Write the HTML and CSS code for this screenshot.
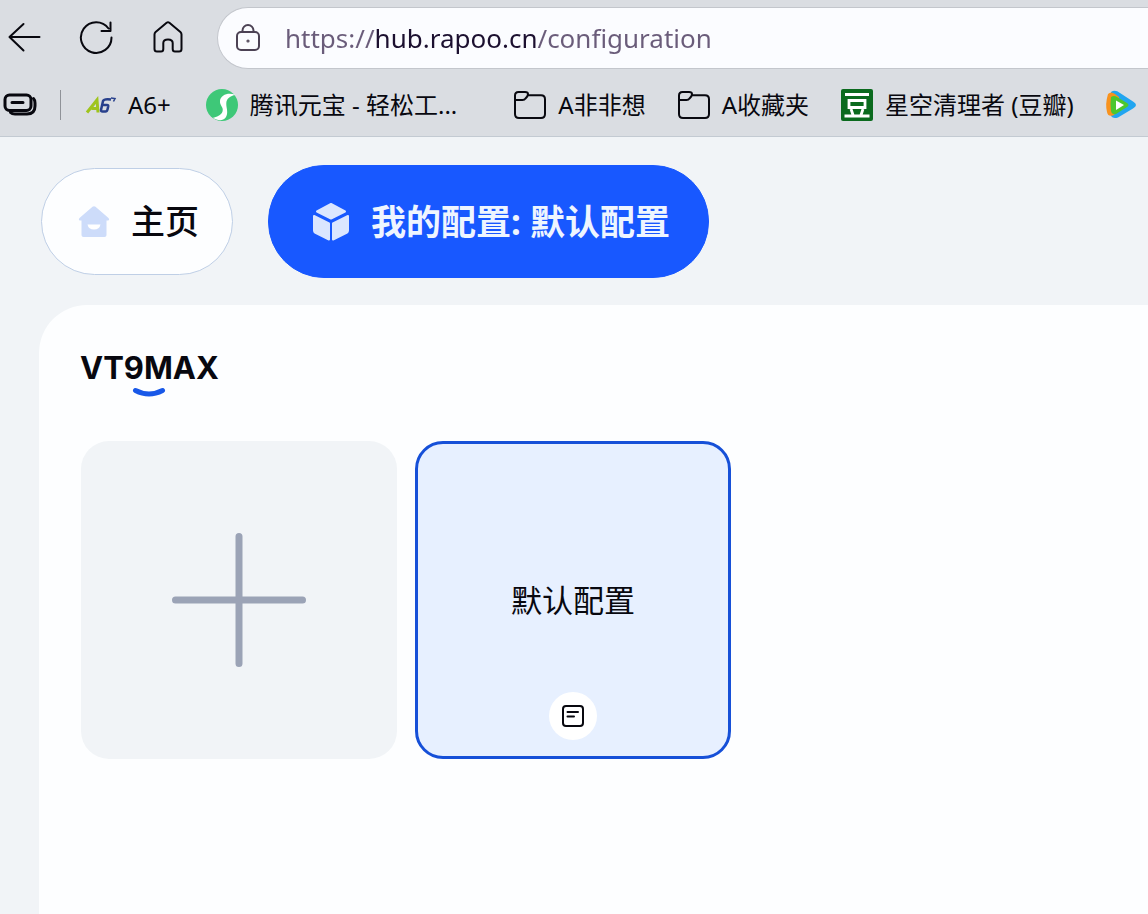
FILE: index.html
```html
<!DOCTYPE html>
<html lang="zh-CN">
<head>
<meta charset="utf-8">
<title>我的配置</title>
<link rel="stylesheet" href="styles.css">
</head>
<body>
<header class="chrome">
  <div class="toolbar">
    <button class="tool" type="button" aria-label="后退">
      <svg width="34" height="34" viewBox="0 0 34 34"><path d="M32.500 16H2.500M16.500 3L2.500 16l14 13.500"/></svg>
    </button>
    <button class="tool" type="button" aria-label="刷新">
      <svg width="34" height="34" viewBox="0 0 34 34"><path d="M32.500 16.500A15.300 15.300 0 1 1 29.500 7.500M31.500 1.500v8.500h-9"/></svg>
    </button>
    <button class="tool" type="button" aria-label="主页">
      <svg width="34" height="34" viewBox="0 0 34 34"><path d="M3.500 13.500Q3.500 12 4.600 11L15.600 1.800Q17 .8 18.400 1.800L29.400 11Q30.500 12 30.500 13.500V28Q30.500 30.500 28 30.500H24Q21.700 30.500 21.700 28V22Q21.700 18.500 17 18.500T12.300 22V28Q12.300 30.500 10 30.500H6Q3.500 30.500 3.500 28Z"/></svg>
    </button>
    <form class="address">
      <svg class="lock" width="26" height="30" viewBox="0 0 26 30"><rect x="2" y="9" width="22" height="18" rx="4"/><path d="M7.500 9V7.500a5.500 5.500 0 0 1 11 0V9"/><circle cx="13" cy="18" r=".6"/></svg>
      <input class="url" type="text" aria-label="地址" value="https://hub.rapoo.cn/configuration">
    </form>
  </div>
  <nav class="bookmarks" aria-label="收藏夹栏">
    <button class="tabs-button" type="button" aria-label="标签页操作">
      <svg width="34" height="24" viewBox="0 0 34 24"><rect x="2" y="2" width="26" height="15.500" rx="4.500"/><path d="M9 9.500h11M30.500 5.500Q32 7 32 10v3q0 8-8 8H12q-3 0-4.500-1.500"/></svg>
    </button>
    <span class="divider"></span>
    <a class="bookmark bookmark-a6" href="#">
      <svg width="32" height="20" viewBox="0 0 32 20"><path d="M2 17.500L12 5l1 12.500M6.500 13.500h7" fill="none" stroke="#9fc41c" stroke-width="3"/><path d="M26 4.500Q19 3.500 18 6L16 15Q15.800 16.500 17.500 16.500h3q1.500 0 2-2l.7-3q.3-1.500-1.200-1.500h-4.500" fill="none" stroke="#28408c" stroke-width="2.500"/><path d="M26 3l4 .5-1.500 3" fill="none" stroke="#28408c" stroke-width="1.500"/></svg>
      <span>A6+</span>
    </a>
    <a class="bookmark bookmark-yuanbao" href="#">
      <svg width="34" height="34" viewBox="0 0 34 34"><circle cx="17" cy="17" r="16" fill="#3ec878"/><path d="M30.500 7C24 4 15.500 6.500 15 13c-.4 5 4 6 2.500 10.500-1.300 4-6 5.500-9.500 6.200 4 3 10 3.500 12.500 0 3.500-5 .500-10 .8-14.500.2-4.500 4-7.500 9.200-8.200Z" fill="#fff"/></svg>
      <span>腾讯元宝 - 轻松工...</span>
    </a>
    <a class="bookmark" href="#">
      <svg class="folder" width="34" height="30" viewBox="0 0 34 30"><path d="M2 5.500Q2 2 5.500 2H12q3 0 3 2t-2.500 4.500Q11.500 10 9.500 10H2M15.500 5.200H28q4 0 4 4V24q0 4-4 4H6q-4 0-4-4V5.500"/></svg>
      <span>A非非想</span>
    </a>
    <a class="bookmark" href="#">
      <svg class="folder" width="34" height="30" viewBox="0 0 34 30"><path d="M2 5.500Q2 2 5.500 2H12q3 0 3 2t-2.500 4.500Q11.500 10 9.500 10H2M15.500 5.200H28q4 0 4 4V24q0 4-4 4H6q-4 0-4-4V5.500"/></svg>
      <span>A收藏夹</span>
    </a>
    <a class="bookmark" href="#">
      <svg width="34" height="34" viewBox="0 0 34 34"><rect x="1" y="1" width="32" height="32" rx="2" fill="#0b6a1e"/><path d="M5 6.500h24M9 12.500h16v7H9ZM11 21l2 6M23 21l-2 6M4.500 28h25" fill="none" stroke="#fff" stroke-width="2.800"/></svg>
      <span>星空清理者 (豆瓣)</span>
    </a>
    <a class="bookmark" href="#" aria-label="腾讯视频">
      <svg width="32" height="30" viewBox="0 0 32 30"><path d="M6 2Q10-1 15 3L28 11.500Q34 15 28 18.500L13 27.500Q8 29 6 26Z" fill="#21a5f0"/><path d="M3 4Q6 1 10 4L14 7v14L8 25.500Q3 27 2 22 0 14 3 4Z" fill="#f8921e"/><path d="M6 7Q9 5 12 7L22 13Q25 15 22 17L11 24Q7 25 6 21Q5 14 6 7Z" fill="#4cc72e"/><path d="M11 10.500L19 15l-8 5Z" fill="#fff"/></svg>
    </a>
  </nav>
</header>
<div class="app">
  <nav class="tabs" aria-label="主导航">
    <a class="tab" href="#">
      <svg width="32" height="34" viewBox="0 0 32 34"><path d="M14.500 1.700Q16 .6 17.500 1.700L30.500 13q1.500 2-.5 2.500h-1.500V30q0 2-2 2h-21q-2 0-2-2V15.500H2Q0 15 1.500 13Z" fill="#cddcfa"/><path d="M9.500 19.500h13q-1 5-6.500 5t-6.500-5Z" fill="#fff"/></svg>
      <span>主页</span>
    </a>
    <a class="tab tab-active" href="#" aria-current="page">
      <svg width="38" height="40" viewBox="0 0 38 40"><g fill="#dbe6ff" stroke="#dbe6ff" stroke-width="2" stroke-linejoin="round"><path d="M19 2L33 9.500 19 16.500 5 9.500Z"/><path d="M2 14L17 21.500V37.500L3 30.500Q2 30 2 28.500Z"/><path d="M36 14L21 21.500V37.500L35 30.500Q36 30 36 28.500Z"/></g></svg>
      <span>我的配置: 默认配置</span>
    </a>
  </nav>
  <main class="panel">
    <h1 class="device">
      <span>VT9MAX</span>
      <svg width="34" height="12" viewBox="0 0 34 12"><path d="M3.500 3.500Q17 10.500 30.500 3.500" fill="none" stroke="#1858e8" stroke-width="5" stroke-linecap="round"/></svg>
    </h1>
    <div class="cards">
      <button class="card card-add" type="button" aria-label="添加配置">
        <svg width="136" height="136" viewBox="0 0 136 136"><path d="M68 4.500v127M4.500 68h127" stroke="#9ba3b6" stroke-width="7" stroke-linecap="round"/></svg>
      </button>
      <article class="card card-selected">
        <span class="card-name">默认配置</span>
        <button class="note" type="button" aria-label="备注">
          <svg width="24" height="24" viewBox="0 0 24 24"><rect x="2" y="2" width="20" height="20" rx="3"/><path d="M6.500 8H17M6.500 12.500H13"/></svg>
        </button>
      </article>
    </div>
  </main>
</div>
</body>
</html>
```
FILE: styles.css
```css
* {
  box-sizing: border-box;
}

body {
  margin: 0;
  min-height: 100vh;
  display: flex;
  flex-direction: column;
  overflow-x: hidden;
  background: #f1f4f7;
  color: #08080f;
  font-family: "Noto Sans", "Noto Sans CJK SC", sans-serif;
}

a {
  color: inherit;
  text-decoration: none;
}

button {
  padding: 0;
  border: 0;
  background: none;
  color: inherit;
  font: inherit;
}

svg {
  display: block;
  flex: none;
}

.chrome {
  overflow: hidden;
  background: #dadde2;
  border-bottom: 1px solid #c3cad2;
}

.toolbar {
  display: flex;
  align-items: center;
  gap: 38px;
  padding: 7px 0 0 7px;
}

.tool svg,
.tabs-button svg,
.folder,
.lock,
.note svg {
  fill: none;
  stroke: currentColor;
  stroke-width: 2;
  stroke-linecap: round;
  stroke-linejoin: round;
}

.tabs-button svg {
  stroke-width: 3;
}

.address {
  flex: 1;
  display: flex;
  align-items: center;
  gap: 24px;
  height: 62px;
  margin-left: -6px;
  padding-left: 17px;
  border: 1px solid #c3c6cc;
  border-right: 0;
  border-radius: 31px 0 0 31px;
  background: #fbfcff;
}

.lock {
  color: #4c4254;
}

.url {
  flex: 1;
  min-width: 0;
  padding: 0;
  border: 0;
  outline: 0;
  font: 26px/36px "Noto Sans", sans-serif;
  color: transparent;
  background: linear-gradient(90deg, #6a5c7a 90px, #1c1030 90px, #1c1030 252px, #6a5c7a 252px);
  -webkit-background-clip: text;
  background-clip: text;
}

.bookmarks {
  display: flex;
  align-items: center;
  height: 67px;
  padding: 5px 0 0 3px;
  font-size: 24px;
  line-height: 34px;
  white-space: nowrap;
}

.divider {
  flex: none;
  width: 1px;
  height: 30px;
  margin: 0 24px 0 23px;
  background: #8f9298;
}

.bookmark {
  display: flex;
  align-items: center;
  gap: 11px;
  margin-right: 31px;
}

.bookmark-a6 {
  margin-right: 34px;
}

.bookmark-yuanbao {
  margin-right: 56px;
}

.app {
  flex: 1;
  display: flex;
  flex-direction: column;
}

.tabs {
  display: flex;
  align-items: center;
  gap: 35px;
  padding: 28px 41px 27px;
}

.tab {
  display: flex;
  align-items: center;
  gap: 21px;
  padding: 28px 33px 28px 36px;
  border: 1px solid #bfcfe6;
  border-radius: 56px;
  background: #fdfeff;
  font-size: 34px;
  line-height: 49px;
  font-weight: 500;
}

.tab-active {
  padding: 31px 38px 31px 43px;
  border-color: #1858ff;
  background: #1858ff;
  color: #eef5ff;
  font-size: 35px;
  font-weight: 700;
}

.panel {
  flex: 1;
  margin-left: 39px;
  padding: 44px 41px;
  border-radius: 48px 0 0 0;
  background: #fdfeff;
}

.device {
  display: flex;
  flex-direction: column;
  align-items: center;
  width: max-content;
  margin: 0 0 42px;
  font: 700 31px/38px Inter, sans-serif;
}

.cards {
  display: flex;
  flex-wrap: wrap;
  gap: 18px;
  padding-left: 1px;
}

.card {
  display: grid;
  place-items: center;
  width: 316px;
  height: 318px;
  border-radius: 28px;
}

.card-add {
  background: #f1f4f7;
}

.card-selected {
  grid-template-rows: 1fr auto 1fr;
  border: 3px solid #1650d8;
  background: #e7f0ff;
}

.card-name {
  grid-row: 2;
  font-size: 31px;
  line-height: 44px;
}

.note {
  grid-row: 3;
  display: grid;
  place-items: center;
  align-self: end;
  width: 48px;
  height: 48px;
  margin-bottom: 16px;
  border-radius: 50%;
  background: #fff;
}
```
